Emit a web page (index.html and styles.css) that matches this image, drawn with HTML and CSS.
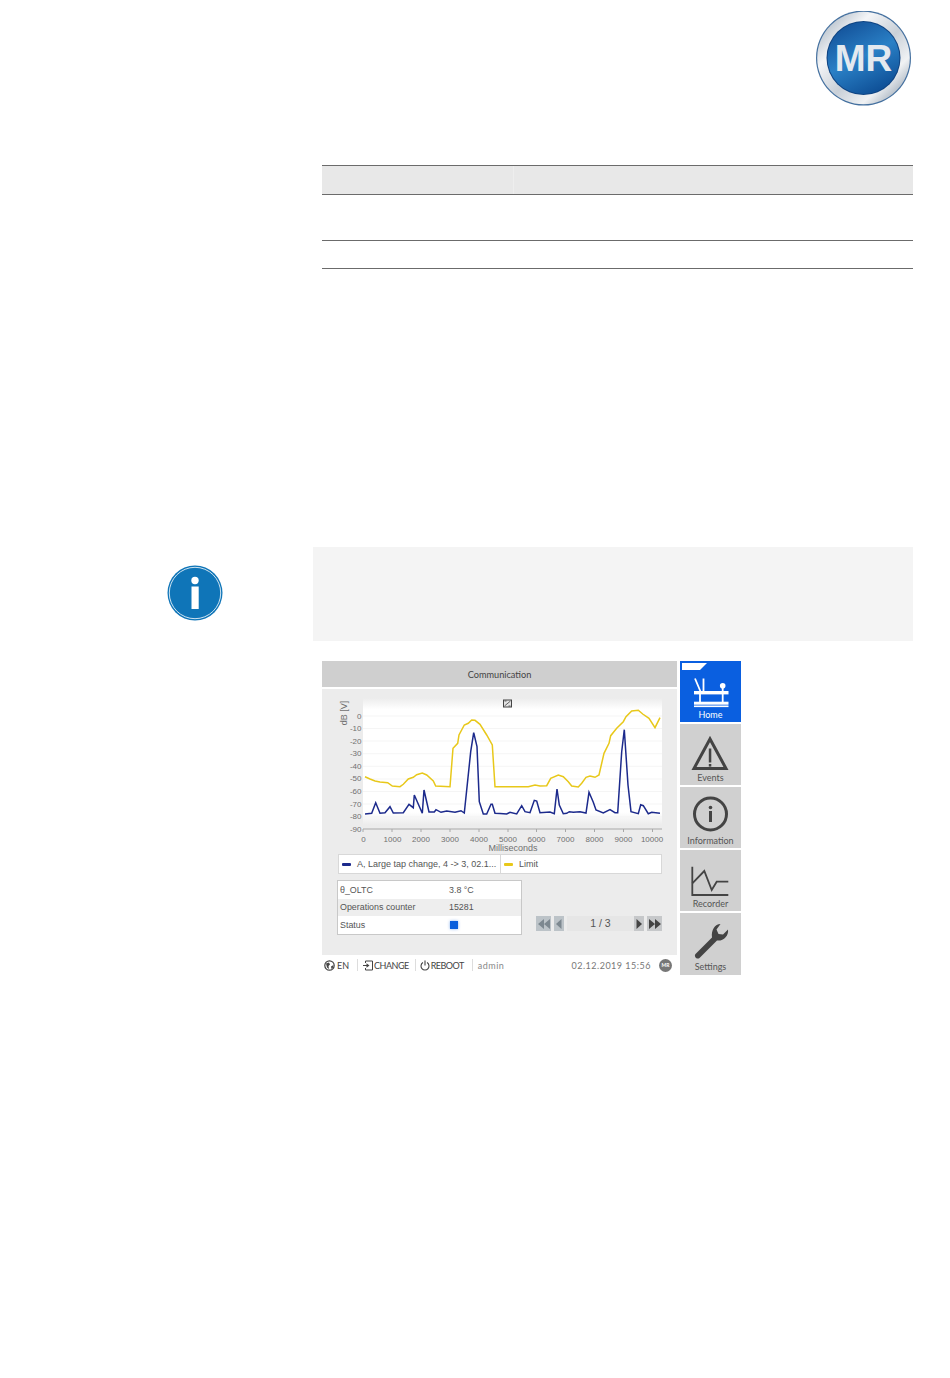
FILE: index.html
```html
<!DOCTYPE html>
<html lang="en">
<head>
  <meta charset="UTF-8" />
  <title>Communication</title>
  <link rel="stylesheet" href="styles.css">
</head>
<body>

  <header class="page-head">
    <svg class="logo" viewBox="0 0 96 96" width="96" height="96">
      <defs>
        <linearGradient id="ring" x1="0.1" y1="0.1" x2="0.9" y2="0.9">
          <stop offset="0" stop-color="#b4bfca"/>
          <stop offset="0.25" stop-color="#f4f5f7"/>
          <stop offset="0.55" stop-color="#c9d0d8"/>
          <stop offset="0.8" stop-color="#f0f2f4"/>
          <stop offset="1" stop-color="#a3afbc"/>
        </linearGradient>
        <linearGradient id="disc" x1="0.2" y1="0" x2="0.7" y2="1">
          <stop offset="0" stop-color="#124f97"/>
          <stop offset="0.5" stop-color="#2a80c6"/>
          <stop offset="1" stop-color="#0d4d94"/>
        </linearGradient>
      </defs>
      <circle cx="47.5" cy="47" r="47.5" fill="#44709f"/>
      <circle cx="47.5" cy="47" r="46.3" fill="url(#ring)"/>
      <circle cx="47.5" cy="47" r="37" fill="#0e4382"/>
      <circle cx="47.5" cy="47" r="36" fill="url(#disc)"/>
      <text class="logo-text" x="47.5" y="60" text-anchor="middle">MR</text>
    </svg>
  </header>

  <table class="spec">
    <tr class="spec-head"><th></th><th></th></tr>
    <tr class="spec-tall"><td></td><td></td></tr>
    <tr class="spec-low"><td></td><td></td></tr>
  </table>

  <section class="note">
    <div class="note-icon">
      <svg viewBox="0 0 56 56" width="56" height="56">
        <circle cx="28" cy="28" r="27.5" fill="#0f75b8"/>
        <circle cx="28" cy="28" r="25.7" fill="none" stroke="#fff" stroke-width="0.8"/>
        <circle cx="28" cy="15.5" r="3.7" fill="#fff"/>
        <rect x="24.5" y="21.5" width="7.2" height="22.5" fill="#fff"/>
      </svg>
    </div>
    <div class="note-box"></div>
  </section>

  <section class="screen">
    <div class="screen-main">
      <div class="screen-title">Communication</div>
      <div class="panel">
        <svg class="chart" viewBox="322 689 355 165" width="355" height="165">
          <defs>
            <linearGradient id="plot" x1="0" y1="0" x2="0" y2="1">
              <stop offset="0" stop-color="#ececec"/>
              <stop offset="0.09" stop-color="#fff"/>
              <stop offset="0.9" stop-color="#fff"/>
              <stop offset="1" stop-color="#ececec"/>
            </linearGradient>
          </defs>
          <rect x="363" y="698" width="299" height="127" fill="url(#plot)"/>
          <g class="grid">
            <path d="M363 716H662M363 728.5H662M363 741H662M363 753.7H662M363 766.3H662M363 779H662M363 791.5H662M363 804H662M363 816.7H662"/>
          </g>
          <path class="axis" d="M363 829H662M363 829v3M392 829v3M421 829v3M450 829v3M479 829v3M508 829v3M536.5 829v3M565.5 829v3M594.5 829v3M623.5 829v3M652.5 829v3"/>
          <g class="tick-y">
            <text x="361.5" y="718.5">0</text>
            <text x="361.5" y="731">-10</text>
            <text x="361.5" y="743.5">-20</text>
            <text x="361.5" y="756">-30</text>
            <text x="361.5" y="768.7">-40</text>
            <text x="361.5" y="781.3">-50</text>
            <text x="361.5" y="794">-60</text>
            <text x="361.5" y="806.5">-70</text>
            <text x="361.5" y="819">-80</text>
            <text x="361.5" y="831.7">-90</text>
          </g>
          <g class="tick-x">
            <text x="363.5" y="841.5">0</text>
            <text x="392.5" y="841.5">1000</text>
            <text x="421" y="841.5">2000</text>
            <text x="450" y="841.5">3000</text>
            <text x="479" y="841.5">4000</text>
            <text x="508" y="841.5">5000</text>
            <text x="536.5" y="841.5">6000</text>
            <text x="565.5" y="841.5">7000</text>
            <text x="594.5" y="841.5">8000</text>
            <text x="623.5" y="841.5">9000</text>
            <text x="652" y="841.5">10000</text>
          </g>
          <text class="axis-title" x="513" y="850.5">Milliseconds</text>
          <text class="axis-title" transform="translate(347 713) rotate(-90)">dB [V]</text>
          <g class="zoom-icon">
            <rect x="503.5" y="700" width="8" height="7"/>
            <path d="M504.5 706L510.5 701M504.5 701h2M510.5 706h-2"/>
          </g>
          <polyline class="line-limit" points="365,776.7 370,779 375,781 380,782 387.7,782.7 392.3,786 400,786.7 403.3,784.3 408.3,779 413.3,777.3 416.7,774.7 422.3,773 426.7,775 433.3,781 435.7,786 450,786.7 453,748.3 457.7,743.3 459,735 464.3,725 468.3,723.3 471.7,720 475,720.3 480,724.3 486.7,735 492.3,745 495,786.7 528.3,786.7 535,785 540,786 546.7,785.7 550.7,778.3 558.3,775 563.3,776.7 568.3,781.7 571.7,786 578.3,787 581.7,783.3 586,777.3 590,776 595,777.3 599,775 604,753.3 609,743.3 610.7,735.7 616.7,728.3 623.3,721.7 626,716.7 631.7,711 638.3,710.3 642.7,714 649,718.3 655,727.7 660,717.7"/>
          <polyline class="line-data" points="365,814 371.7,813.3 375.7,802.7 380,813.3 385,812.7 390,806.7 393.3,813 403.3,812.7 409,804.3 413.3,807.7 414.3,795 422.3,813.3 424,790 429,812 434.3,812 436,809.7 441,812.3 446.7,811 455,812.3 461,810.7 464.3,813 470.7,751.7 473.7,732.7 477,746.7 479.3,801.7 483.3,814 486.7,814 491,804.3 492.3,804.3 495,813.3 500,813.5 506.7,814 510,812.3 516.7,814 521.7,805.7 525,811.7 530,812.7 534.3,800.3 536.7,801 540,812.7 550,812 554.3,813.7 557,789 559.3,805 563.3,813.7 566.7,813.3 569.3,811.7 573.3,812.3 580,811.7 586,813 589,792.3 593.3,802.3 596,810 603.3,813 610,809.7 615,812.7 617.7,812.7 621.7,751.7 624.3,729.7 628,785 631,811.7 638.3,813.7 640.7,804.7 643.3,805.7 648.3,813.7 651.7,812.3 660,813.3"/>
        </svg>

        <div class="legend">
          <div class="legend-item legend-first"><span class="swatch swatch-blue"></span>A, Large tap change, 4 -&gt; 3, 02.1...</div>
          <div class="legend-item"><span class="swatch swatch-yellow"></span>Limit</div>
        </div>

        <div class="lower">
          <div class="values">
            <div class="value-row"><div class="value-name">θ_OLTC</div><div>3.8 °C</div></div>
            <div class="value-row value-alt"><div class="value-name">Operations counter</div><div>15281</div></div>
            <div class="value-row"><div class="value-name">Status</div><div><span class="status"></span></div></div>
          </div>
          <div class="pager">
            <div class="pg pg-off pg-wide"><svg viewBox="0 0 14 10" width="14" height="10"><path d="M7 0v10L1 5zM13 0v10L7 5z"/></svg></div>
            <div class="pg pg-off"><svg viewBox="0 0 10 10" width="10" height="10"><path d="M7.5 0v10L2 5z"/></svg></div>
            <div class="pg-field">1 / 3</div>
            <div class="pg"><svg viewBox="0 0 10 10" width="10" height="10"><path d="M2.5 0v10L8 5z"/></svg></div>
            <div class="pg pg-wide"><svg viewBox="0 0 14 10" width="14" height="10"><path d="M1 0v10l6-5zM7 0v10l6-5z"/></svg></div>
          </div>
        </div>
      </div>

      <div class="status-bar">
        <svg viewBox="0 0 11 11" width="11" height="11"><circle cx="5.5" cy="5.5" r="4.7" fill="none" stroke="#444" stroke-width="1.2"/><path d="M2 3.5L5 2.5 6 4.5 4.5 6 5 9 3 7.5zM7 6.5L9.5 5 9 7.5 7.5 9z" fill="#444"/></svg>
        <span class="bar-en">EN</span>
        <span class="bar-sep"></span>
        <svg viewBox="0 0 10 11" width="10" height="11"><path d="M2.5 3V1h7v9h-7V8" fill="none" stroke="#444"/><path d="M0 5h3.5V3.2L6.5 5.5 3.5 7.8V6H0z" fill="#444"/></svg>
        <span class="bar-btn">CHANGE</span>
        <span class="bar-sep bar-sep-tight"></span>
        <svg viewBox="0 0 10 11" width="10" height="11"><path d="M3 2.6a4 4 0 1 0 4 0" fill="none" stroke="#444" stroke-width="1.1"/><path d="M5 0.5V5.5" stroke="#444" stroke-width="1.1"/></svg>
        <span class="bar-btn">REBOOT</span>
        <span class="bar-sep"></span>
        <span class="bar-user">admin</span>
        <span class="bar-date">02.12.2019 15:56</span>
        <span class="bar-mr">MR</span>
      </div>
    </div>

    <nav class="side">
      <a class="side-btn side-active">
        <svg viewBox="0 0 61 48" width="61" height="48">
          <path d="M2 2H27L20 9H2z" fill="#fff"/>
          <g fill="none" stroke="#fff" stroke-width="1.8">
            <path d="M15 17.5L20.5 30.5M23.5 17.5V30.5M42.7 26V30.5"/>
            <path d="M20 33V41M42.7 33V41"/>
          </g>
          <circle cx="42.7" cy="24.7" r="2.8" fill="#fff"/>
          <rect x="14" y="30" width="34.5" height="3.4" fill="#fff"/>
          <rect x="14" y="40.7" width="34.5" height="3" fill="#fff"/>
          <rect x="14" y="44.5" width="34.5" height="1.6" fill="#fff"/>
        </svg>
        <span class="side-label">Home</span>
      </a>
      <a class="side-btn">
        <svg viewBox="0 0 61 48" width="61" height="48">
          <path d="M30 15L14 44.5H46z" fill="none" stroke="#444" stroke-width="3"/>
          <rect x="28.8" y="24.5" width="2.5" height="14" fill="#444"/>
          <rect x="28.8" y="40" width="2.5" height="2.6" fill="#444"/>
        </svg>
        <span class="side-label">Events</span>
      </a>
      <a class="side-btn">
        <svg viewBox="0 0 61 48" width="61" height="48">
          <circle cx="30.5" cy="27" r="16" fill="none" stroke="#444" stroke-width="3"/>
          <circle cx="30.5" cy="20.5" r="1.8" fill="#444"/>
          <rect x="29" y="24" width="3" height="11" fill="#444"/>
        </svg>
        <span class="side-label">Information</span>
      </a>
      <a class="side-btn">
        <svg viewBox="0 0 61 48" width="61" height="48">
          <path d="M12.3 16.7V45H48.3" fill="none" stroke="#444" stroke-width="1.8"/>
          <path d="M12.3 33.3L24.3 21 31.7 40 36.7 31.7H48.3" fill="none" stroke="#444" stroke-width="1.8"/>
        </svg>
        <span class="side-label">Recorder</span>
      </a>
      <a class="side-btn">
        <svg viewBox="0 0 61 48" width="61" height="48">
          <path d="M15.5 41L32 24.5C31 17 35 11 40.5 11L36.5 16.5 38.5 21 43 21.5 48 16.5C49 23 43 28.5 37 27.5L19.5 45C17 47 13.5 43.5 15.5 41Z" fill="#444"/>
        </svg>
        <span class="side-label">Settings</span>
      </a>
    </nav>
  </section>

</body>
</html>
```

FILE: styles.css
```css
* {
  box-sizing: border-box;
}

body {
  margin: 0;
  background-color: #fff;
  font-family: 'Liberation Sans', sans-serif;
  color: #444;
  overflow-x: hidden;
}

.page-head {
  display: flex;
  justify-content: flex-end;
  height: 165px;
  padding: 11px 38px 0 0;
}

.logo {
  display: block;
}

.logo-text {
  font-family: 'Liberation Sans', sans-serif;
  font-weight: bold;
  font-size: 37px;
  fill: #e4e9ef;
}

/* table */
.spec {
  border-collapse: collapse;
  table-layout: fixed;
  width: 591px;
  margin-left: 322px;
}

.spec th,
.spec td {
  padding: 0;
  border-top: 1px solid #6b6b6b;
  border-bottom: 1px solid #6b6b6b;
}

.spec th:first-child,
.spec td:first-child {
  width: 191px;
}

.spec th {
  background-color: #e8e8e8;
}

.spec th + th {
  border-left: 1px solid #eeeeee;
}

.spec-head {
  height: 29px;
}

.spec-tall {
  height: 46px;
}

.spec-low {
  height: 28px;
}

/* note */
.note {
  display: flex;
  margin-top: 278px;
}

.note-icon {
  width: 313px;
  padding: 17.5px 0 0 167px;
}

.note-icon svg {
  display: block;
}

.note-box {
  width: 600px;
  height: 94px;
  background-color: #f4f4f4;
}

/* device screen */
.screen {
  display: flex;
  gap: 3px;
  width: 419px;
  height: 314px;
  margin: 20px 0 0 322px;
}

.screen-main {
  width: 355px;
  display: flex;
  flex-direction: column;
}

.screen-title {
  height: 26px;
  line-height: 28px;
  background-color: #cfcfcf;
  text-align: center;
  font-family: 'Lato', sans-serif;
  font-size: 9.2px;
  color: #444;
  margin-bottom: 2px;
}

.panel {
  height: 266px;
  background-color: #ececec;
}

.chart {
  display: block;
}

.grid path {
  fill: none;
  stroke: #f5f5f5;
  stroke-width: 1;
}

.axis {
  fill: none;
  stroke: #a8a8a8;
  stroke-width: 1;
}

.tick-y text {
  font-size: 8px;
  fill: #707070;
  text-anchor: end;
}

.tick-x text {
  font-size: 8px;
  fill: #707070;
  text-anchor: middle;
}

.axis-title {
  font-size: 9px;
  fill: #707070;
  text-anchor: middle;
}

.zoom-icon rect {
  fill: #e3e3e3;
  stroke: #444;
  stroke-width: 1;
}

.zoom-icon path {
  fill: none;
  stroke: #444;
  stroke-width: 0.8;
}

.line-limit {
  fill: none;
  stroke: #e8c81a;
  stroke-width: 1.5;
}

.line-data {
  fill: none;
  stroke: #1c2a8c;
  stroke-width: 1.5;
}

.legend {
  display: flex;
  width: 324px;
  height: 20px;
  margin-left: 16px;
  background-color: #fff;
  border: 1px solid #d8d8d8;
  font-size: 9px;
  color: #555;
}

.legend-item {
  display: flex;
  align-items: center;
  padding-left: 3px;
}

.legend-first {
  width: 162px;
  border-right: 1px solid #d8d8d8;
}

.swatch {
  width: 9px;
  height: 3px;
  margin-right: 6px;
  border-radius: 1px;
}

.swatch-blue {
  background-color: #1c2a8c;
}

.swatch-yellow {
  background-color: #e8c81a;
}

.lower {
  display: flex;
  align-items: flex-end;
  gap: 14px;
  margin: 6px 0 0 15px;
}

.values {
  width: 185px;
  height: 55px;
  background-color: #fff;
  border: 1px solid #c8c8c8;
  font-size: 8.9px;
  color: #555;
}

.value-row {
  display: flex;
  align-items: center;
  height: 17.67px;
}

.value-alt {
  background-color: #eeeeee;
}

.value-name {
  width: 111px;
  padding-left: 2px;
}

.status {
  display: block;
  width: 8px;
  height: 8px;
  margin-left: 1px;
  background-color: #0a5fdc;
  box-shadow: 0 0 3px rgba(10, 95, 220, 0.5);
}

.pager {
  display: flex;
  gap: 3px;
  width: 126px;
  height: 15px;
  margin-bottom: 4px;
}

.pg {
  display: flex;
  align-items: center;
  justify-content: center;
  width: 10px;
  background-color: #c6c8ca;
  fill: #444;
}

.pg-wide {
  width: 15px;
}

.pg-off {
  background-color: #bcc3c8;
  fill: #7d8890;
}

.pg-field {
  flex: 1;
  margin-right: -3px;
  background-color: #e6e6e6;
  text-align: center;
  font-size: 10.5px;
  line-height: 15px;
  color: #555;
}

.status-bar {
  display: flex;
  align-items: center;
  height: 20px;
  padding-left: 2px;
  font-family: 'Lato', sans-serif;
  font-size: 9px;
  color: #444;
}

.status-bar svg {
  flex: none;
}

.bar-en {
  margin-left: 2px;
}

.bar-sep {
  width: 1px;
  height: 12px;
  margin: 0 5px 0 8px;
  background-color: #ddd;
}

.bar-sep-tight {
  margin: 0 4px 0 6px;
}

.bar-btn {
  margin-left: 1px;
  letter-spacing: -0.5px;
}

.bar-user {
  color: #888;
  letter-spacing: 0.5px;
}

.bar-date {
  margin-left: auto;
  color: #777;
  letter-spacing: 0.5px;
}

.bar-mr {
  width: 13px;
  height: 13px;
  margin: 0 5px 0 8px;
  border-radius: 50%;
  background-color: #777;
  color: #fff;
  font-size: 5px;
  font-weight: bold;
  line-height: 13px;
  text-align: center;
}

/* side menu */
.side {
  display: flex;
  flex-direction: column;
  gap: 2px;
  width: 61px;
}

.side-btn {
  display: flex;
  flex-direction: column;
  flex: none;
  height: 61px;
  background-color: #d0d0d0;
  overflow: hidden;
}

.side-btn:last-child {
  height: 62px;
}

.side-btn svg {
  display: block;
  flex: none;
}

.side-active {
  background-color: #0a5fe0;
  color: #fff;
}

.side-label {
  text-align: center;
  font-family: 'Lato', sans-serif;
  font-size: 9px;
  line-height: 12px;
  color: #555;
}

.side-active .side-label {
  color: #fff;
}
```
